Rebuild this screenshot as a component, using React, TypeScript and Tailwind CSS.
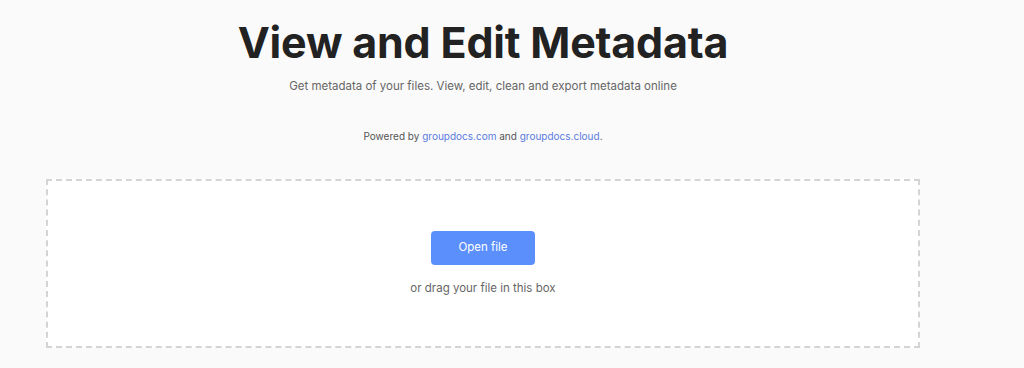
export default function App() {
    return (
        <div className="min-h-[368px] w-full bg-[#fafafa] font-['Inter','Liberation_Sans',sans-serif]">
            <div className="ml-[46px] w-[874px] flex flex-col items-center">
                <h1 className="mt-[16px] text-[43px] leading-[52px] font-bold tracking-[-0.2px] text-[#222]">View and Edit Metadata</h1>
                <p className="mt-[10px] text-[11.5px] leading-[16px] text-[#666]">Get metadata of your files. View, edit, clean and export metadata online</p>
                <p className="mt-[36px] text-[10px] leading-[13px] text-[#555]">
                    Powered by <a className="text-[#5b7be0]">groupdocs.com</a> and <a className="text-[#5b7be0]">groupdocs.cloud</a>.
                </p>
                <div className="mt-[36px] w-full h-[169px] border-2 border-dashed border-[#d4d4d4] bg-white flex flex-col items-center">
                    <button className="mt-[50px] w-[104px] h-[34px] rounded-[4px] bg-[#5b8ffb] text-[11.5px] text-white">Open file</button>
                    <p className="mt-[15px] text-[11.5px] leading-[16px] text-[#666]">or drag your file in this box</p>
                </div>
            </div>
        </div>
    );
}
